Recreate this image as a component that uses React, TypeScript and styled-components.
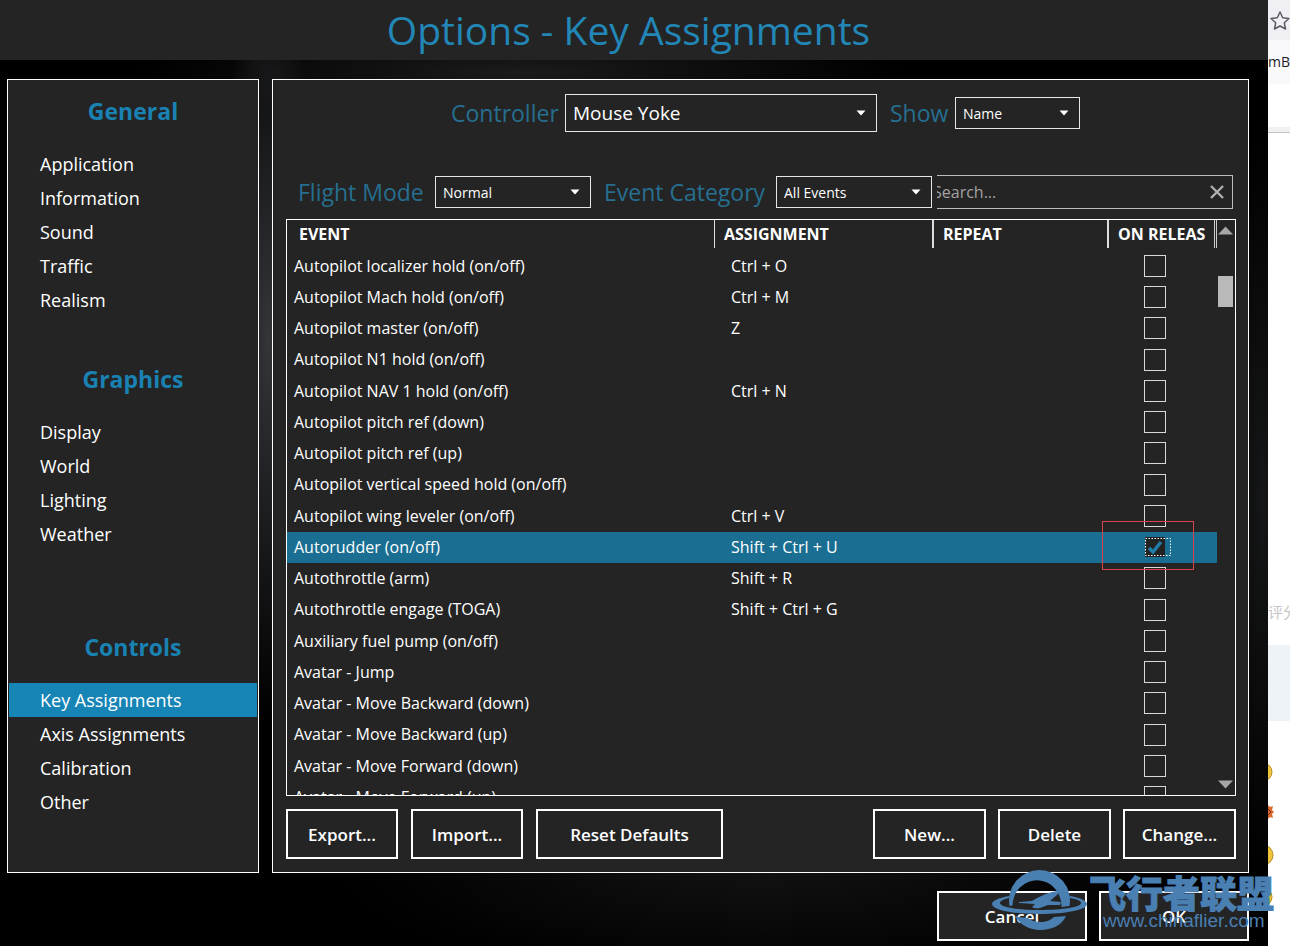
import React from "react";
import styled, { createGlobalStyle } from "styled-components";

const Global = createGlobalStyle`
  * { box-sizing: border-box; }
  body { margin: 0; background: #fff; font-family: "Open Sans", "Noto Sans CJK SC", sans-serif; color: #fff; }
  button, input, select { font-family: inherit; color: inherit; border-radius: 0; margin: 0; }
`;

const Page = styled.div`
  position: relative;
  display: flex;
  height: 100vh;
  min-height: 900px;
  overflow: hidden;
`;

const Dialog = styled.main`
  flex: 1;
  min-width: 0;
  display: flex;
  flex-direction: column;
  background:
    radial-gradient(ellipse 50px 380px at 268px 340px, #34363a, transparent),
    radial-gradient(ellipse 380px 50px at 520px 72px, #1b1b1b, transparent),
    radial-gradient(ellipse 420px 120px at 760px 860px, #131313, transparent),
    radial-gradient(ellipse 40px 380px at 1262px 500px, #161718, transparent),
    #000;
`;

const TitleBar = styled.header`
  height: 60px;
  padding-right: 11px;
  background: #242424;
  text-align: center;
`;

const Title = styled.h1`
  margin: 0;
  font-size: 39px;
  line-height: 59px;
  font-weight: 400;
  color: #2287b7;
`;

const Body = styled.div`
  flex: 1;
  min-height: 0;
  display: flex;
  gap: 13px;
  padding: 19px 19px 18px 7px;
`;

const Sidebar = styled.nav`
  width: 252px;
  border: 1px solid #fff;
  background: #242424;
`;

const Group = styled.section`
  min-height: 268px;
  padding: 0 1px;
`;

const GroupTitle = styled.h2`
  margin: 0;
  height: 67px;
  font-size: 23px;
  line-height: 62px;
  font-weight: 700;
  text-align: center;
  color: #1a82b3;
`;

const NavLink = styled.a<{ $active?: boolean }>`
  display: block;
  padding-left: 31px;
  font-size: 18px;
  line-height: 34px;
  color: #fff;
  text-decoration: none;
  background: ${(p) => (p.$active ? "#1684b5" : "transparent")};
`;

const Panel = styled.section`
  flex: 1;
  min-width: 0;
  display: flex;
  flex-direction: column;
  border: 1px solid #fff;
  padding: 14px 12px 13px 13px;
  background: #242424;
`;

const ControllerRow = styled.div`
  display: flex;
  align-items: center;
  justify-content: center;
  height: 38px;
  padding-left: 22px;
`;

const FilterRow = styled.div`
  display: flex;
  align-items: center;
  margin: 43px 3px 10px 12px;
  height: 34px;
`;

const Label = styled.label<{ $width: number }>`
  width: ${(p) => p.$width}px;
  flex: none;
  font-size: 23px;
  line-height: 32px;
  white-space: nowrap;
  color: #266f90;
`;

const SelectBox = styled.div<{ $width: number }>`
  position: relative;
  width: ${(p) => p.$width}px;
  margin-right: 13px;
  flex: none;
`;

const Select = styled.select<{ $large?: boolean }>`
  display: block;
  appearance: none;
  width: 100%;
  height: ${(p) => (p.$large ? 38 : 32)}px;
  padding: 0 24px 0 7px;
  border: 1px solid #e6e6e6;
  background: #242424;
  font-size: ${(p) => (p.$large ? 19 : 14)}px;
`;

const Caret = styled.svg`
  position: absolute;
  right: 11px;
  top: 50%;
  margin-top: -3px;
  pointer-events: none;
`;

const SearchBox = styled.div`
  flex: 1;
  min-width: 0;
  display: flex;
  align-items: center;
  height: 34px;
  margin-left: -8px;
  border: 1px solid #bdbdbd;
  border-left: 0;
  overflow: hidden;
`;

const SearchInput = styled.input`
  flex: 1;
  min-width: 0;
  height: 32px;
  padding: 0;
  text-indent: -4px;
  border: 0;
  background: transparent;
  font-size: 16px;
  &::placeholder { color: #a2a2a2; opacity: 1; }
`;

const ClearButton = styled.button`
  width: 30px;
  height: 32px;
  padding: 0;
  border: 0;
  background: transparent;
  display: grid;
  place-items: center;
`;

const ListFrame = styled.div`
  flex: 1 1 0;
  min-height: 0;
  display: flex;
  align-items: stretch;
  border: 1px solid #fff;
  overflow: hidden;
`;

const TableClip = styled.div`
  flex: 1;
  min-width: 0;
  overflow: hidden;
`;

const Table = styled.table`
  width: 100%;
  table-layout: fixed;
  border-collapse: separate;
  border-spacing: 0;
`;

const Th = styled.th`
  height: 31px;
  padding: 0 0 3px;
  text-align: left;
  font-size: 16px;
  line-height: 28px;
  font-weight: 700;
  white-space: nowrap;
`;

const HeadCell = styled.div<{ $rule: string; $indent: number }>`
  height: 28px;
  overflow: hidden;
  padding-left: ${(p) => p.$indent}px;
  border-right: ${(p) => p.$rule};
`;

const Row = styled.tr<{ $selected?: boolean }>`
  height: 31px;
  background: ${(p) => (p.$selected ? "#1a6e92" : "transparent")};
  &:nth-child(4n) { height: 32px; }
`;

const Cell = styled.td<{ $indent: number }>`
  padding: 0 0 2px ${(p) => p.$indent}px;
  font-size: 16px;
  line-height: 24px;
  white-space: nowrap;
`;

const CheckCell = styled.td`
  position: relative;
  padding: 0 0 1px 35px;
`;

const Check = styled.input`
  display: block;
  appearance: none;
  width: 22px;
  height: 22px;
  border: 1px solid #d9d9d9;
  background: transparent;
  &:checked {
    border: 1px solid #1a6e92;
    background: #222;
  }
`;

const Tick = styled.svg`
  position: absolute;
  left: 36px;
  top: 6px;
  pointer-events: none;
`;

const Highlight = styled.span`
  position: absolute;
  left: -7px;
  top: -11px;
  width: 92px;
  height: 49px;
  border: 1px solid #d8434e;
  pointer-events: none;
  z-index: 1;
`;

const ScrollBar = styled.div`
  width: 18px;
  display: flex;
  flex-direction: column;
  align-items: center;
  padding: 6px 2px 6px 1px;
`;

const ScrollButton = styled.button`
  width: 15px;
  height: 9px;
  padding: 0;
  border: 0;
  background: transparent;
  svg { display: block; }
`;

const ScrollTrack = styled.div`
  flex: 1;
  width: 15px;
  padding-top: 41px;
`;

const ScrollThumb = styled.div`
  height: 31px;
  background: #b9b9b9;
`;

const Actions = styled.div`
  display: flex;
  justify-content: space-between;
  margin-top: 13px;
`;

const ButtonGroup = styled.div<{ $gap: number }>`
  display: flex;
  gap: ${(p) => p.$gap}px;
`;

const Button = styled.button<{ $width: number }>`
  width: ${(p) => p.$width}px;
  height: 50px;
  padding: 0;
  border: 2px solid #fff;
  background: #242424;
  font-size: 17px;
  font-weight: 600;
`;

const Footer = styled.footer`
  display: flex;
  justify-content: flex-end;
  gap: 12px;
  padding: 0 19px 5px;
`;

const Backdrop = styled.aside`
  width: 22px;
  flex: none;
  display: flex;
  flex-direction: column;
  overflow: hidden;
  background: #fff;
  color: #1c1c28;
`;

const TabStrip = styled.div`
  height: 40px;
  background: #f0eff4;
`;

const Bookmarks = styled.div`
  height: 44px;
  background: #f9f9fb;
  font-size: 14px;
  line-height: 44px;
`;

const PageEdge = styled.div`
  height: 49px;
  border-top: 43px solid #fff;
  border-bottom: 1px solid #c4c4c4;
  background: #f0f0f0;
`;

const RatingText = styled.div`
  margin-top: 468px;
  height: 44px;
  font-size: 15px;
  line-height: 22px;
  color: #c6c6c6;
  white-space: nowrap;
`;

const PaleBlock = styled.div`
  height: 76px;
  background: #eef3f8;
`;

const Emojis = styled.svg`
  display: block;
  margin-top: 38px;
`;

const Watermark = styled.div`
  position: absolute;
  right: 12px;
  bottom: 14px;
  display: flex;
  align-items: flex-start;
  gap: 1px;
  color: #4a7fb2;
  pointer-events: none;
`;

const MarkText = styled.div`
  width: 189px;
  padding-top: 5px;
`;

const MarkName = styled.div`
  font-family: "Noto Sans CJK SC", sans-serif;
  font-weight: 900;
  font-size: 37px;
  line-height: 38px;
  white-space: nowrap;
  -webkit-text-stroke: 1px currentColor;
`;

const MarkUrl = styled.div`
  padding-left: 14px;
  font-family: "Liberation Sans", sans-serif;
  font-size: 19px;
  line-height: 20px;
`;

type Item = [string, string];

const rows: Item[] = [
  ["Autopilot localizer hold (on/off)", "Ctrl + O"],
  ["Autopilot Mach hold (on/off)", "Ctrl + M"],
  ["Autopilot master (on/off)", "Z"],
  ["Autopilot N1 hold (on/off)", ""],
  ["Autopilot NAV 1 hold (on/off)", "Ctrl + N"],
  ["Autopilot pitch ref (down)", ""],
  ["Autopilot pitch ref (up)", ""],
  ["Autopilot vertical speed hold (on/off)", ""],
  ["Autopilot wing leveler (on/off)", "Ctrl + V"],
  ["Autorudder (on/off)", "Shift + Ctrl + U"],
  ["Autothrottle (arm)", "Shift + R"],
  ["Autothrottle engage (TOGA)", "Shift + Ctrl + G"],
  ["Auxiliary fuel pump (on/off)", ""],
  ["Avatar - Jump", ""],
  ["Avatar - Move Backward (down)", ""],
  ["Avatar - Move Backward (up)", ""],
  ["Avatar - Move Forward (down)", ""],
  ["Avatar - Move Forward (up)", ""],
];

const groups = [
  { title: "General", items: ["Application", "Information", "Sound", "Traffic", "Realism"] },
  { title: "Graphics", items: ["Display", "World", "Lighting", "Weather"] },
  { title: "Controls", items: ["Key Assignments", "Axis Assignments", "Calibration", "Other"] },
];

function Dropdown(props: { id: string; width: number; value: string; large?: boolean }) {
  return (
    <SelectBox $width={props.width}>
      <Select id={props.id} $large={props.large} defaultValue={props.value}>
        <option>{props.value}</option>
      </Select>
      <Caret width="10" height="6" viewBox="0 0 10 6">
        <path d="M0.5 0.5h9L5 5.5z" fill="#fff" />
      </Caret>
    </SelectBox>
  );
}

export default function App() {
  return (
    <>
      <Global />
      <Page>
        <Dialog>
          <TitleBar>
            <Title>Options - Key Assignments</Title>
          </TitleBar>
          <Body>
            <Sidebar>
              {groups.map((g) => (
                <Group key={g.title}>
                  <GroupTitle>{g.title}</GroupTitle>
                  {g.items.map((item) => (
                    <NavLink href="#" key={item} $active={item === "Key Assignments"}>
                      {item}
                    </NavLink>
                  ))}
                </Group>
              ))}
            </Sidebar>
            <Panel>
              <ControllerRow>
                <Label htmlFor="controller" $width={114}>Controller</Label>
                <Dropdown id="controller" width={312} value="Mouse Yoke" large />
                <Label htmlFor="show" $width={65}>Show</Label>
                <Dropdown id="show" width={125} value="Name" />
              </ControllerRow>
              <FilterRow>
                <Label htmlFor="mode" $width={137}>Flight Mode</Label>
                <Dropdown id="mode" width={156} value="Normal" />
                <Label htmlFor="category" $width={172}>Event Category</Label>
                <Dropdown id="category" width={156} value="All Events" />
                <SearchBox>
                  <SearchInput type="text" placeholder="Search..." aria-label="Search" />
                  <ClearButton aria-label="Clear search">
                    <svg width="14" height="14" viewBox="0 0 14 14">
                      <path d="M1 1l12 12M13 1L1 13" stroke="#b0b0b0" strokeWidth="2.4" />
                    </svg>
                  </ClearButton>
                </SearchBox>
              </FilterRow>
              <ListFrame>
                <TableClip>
                  <Table>
                    <colgroup>
                      <col />
                      <col width="219" />
                      <col width="175" />
                      <col width="108" />
                    </colgroup>
                    <thead>
                      <tr>
                        <Th><HeadCell $rule="1px solid #ddd" $indent={12}>EVENT</HeadCell></Th>
                        <Th><HeadCell $rule="2px solid #ddd" $indent={9}>ASSIGNMENT</HeadCell></Th>
                        <Th><HeadCell $rule="2px solid #ddd" $indent={9}>REPEAT</HeadCell></Th>
                        <Th><HeadCell $rule="3px double #ccc" $indent={9}>ON RELEAS</HeadCell></Th>
                      </tr>
                    </thead>
                    <tbody>
                      {rows.map(([event, keys]) => {
                        const selected = event === "Autorudder (on/off)";
                        return (
                          <Row key={event} $selected={selected}>
                            <Cell $indent={7}>{event}</Cell>
                            <Cell $indent={16}>{keys}</Cell>
                            <Cell $indent={16} />
                            <CheckCell>
                              <Check type="checkbox" defaultChecked={selected} aria-label={event} />
                              {selected && (
                                <>
                                  <Tick width="27" height="19" viewBox="0 0 27 19">
                                    <path d="M4 10l4 4 8-10" fill="none" stroke="#1f7fa8" strokeWidth="3.4" />
                                    <rect x="0.5" y="0.5" width="25" height="17" fill="none" stroke="#fff" strokeDasharray="1.5 1.5" />
                                  </Tick>
                                  <Highlight />
                                </>
                              )}
                            </CheckCell>
                          </Row>
                        );
                      })}
                    </tbody>
                  </Table>
                </TableClip>
                <ScrollBar>
                  <ScrollButton aria-label="Scroll up">
                    <svg width="15" height="9" viewBox="0 0 15 9"><path d="M0 8.5L7.5 0.5 15 8.5z" fill="#a6a6a6" /></svg>
                  </ScrollButton>
                  <ScrollTrack><ScrollThumb /></ScrollTrack>
                  <ScrollButton aria-label="Scroll down">
                    <svg width="15" height="9" viewBox="0 0 15 9"><path d="M0 0.5L7.5 8.5 15 0.5z" fill="#a6a6a6" /></svg>
                  </ScrollButton>
                </ScrollBar>
              </ListFrame>
              <Actions>
                <ButtonGroup $gap={13}>
                  <Button $width={112}>Export...</Button>
                  <Button $width={112}>Import...</Button>
                  <Button $width={187}>Reset Defaults</Button>
                </ButtonGroup>
                <ButtonGroup $gap={12}>
                  <Button $width={113}>New...</Button>
                  <Button $width={113}>Delete</Button>
                  <Button $width={113}>Change...</Button>
                </ButtonGroup>
              </Actions>
            </Panel>
          </Body>
          <Footer>
            <Button $width={150}>Cancel</Button>
            <Button $width={150}>OK</Button>
          </Footer>
        </Dialog>
        <Backdrop>
          <TabStrip>
            <svg width="22" height="40" viewBox="0 0 22 40">
              <path d="M12 12l2.7 5.7 6.2 .8-4.6 4.3 1.2 6.2-5.5-3-5.5 3 1.2-6.2L3 18.500l6.300-.8z" fill="none" stroke="#5b5b66" strokeWidth="1.5" strokeLinejoin="round" />
            </svg>
          </TabStrip>
          <Bookmarks>mB</Bookmarks>
          <PageEdge />
          <RatingText>评分</RatingText>
          <PaleBlock />
          <Emojis width="22" height="150" viewBox="0 0 22 150">
            <circle cx="-5" cy="13" r="9" fill="#f0c53c" stroke="#b98a28" />
            <path d="M0 46l2 2 3-1-1 4 2 2-2 2 1 4-3-1-2 2z" fill="#d8692a" />
            <path d="M0 50l3 3-3 3" fill="none" stroke="#7a2e14" />
            <circle cx="-5" cy="96" r="10" fill="#f0c53c" stroke="#b98a28" />
            <circle cx="-5" cy="138" r="9" fill="#f0c53c" stroke="#b98a28" />
          </Emojis>
        </Backdrop>
        <Watermark>
          <svg width="96" height="64" viewBox="0 0 96 64" fill="currentColor">
            <path d="M17.500 38A30.500 30.500 0 1 1 77.500 38L69.500 39A24.500 26 0 1 0 20.500 37.500z" />
            <path d="M17 28C6 30 0 33 0 36c0 6 21 10 47 10s48-4 48-10c0-3-6-6-17-8l0 2c7 1 11 3 11 5 0 4-18 7-41 7S8 39 8 35c0-2 4-4 9-5z" />
            <path d="M23 48c4 1 9 2 13 2 4 3 8 4 12 4 6 0 11-2 14-5l12-1c-4 9-14 14-26 14-11 0-21-6-25-14z" />
            <path d="M27 34l13-1c8-5 17-9 26-10l0 3-8 7 11 1-1 3-12 0-8 3c-4 1-9 0-7-2l2-2-16-1z" />
          </svg>
          <MarkText>
            <MarkName>飞行者联盟</MarkName>
            <MarkUrl>www.chinaflier.com</MarkUrl>
          </MarkText>
        </Watermark>
      </Page>
    </>
  );
}
